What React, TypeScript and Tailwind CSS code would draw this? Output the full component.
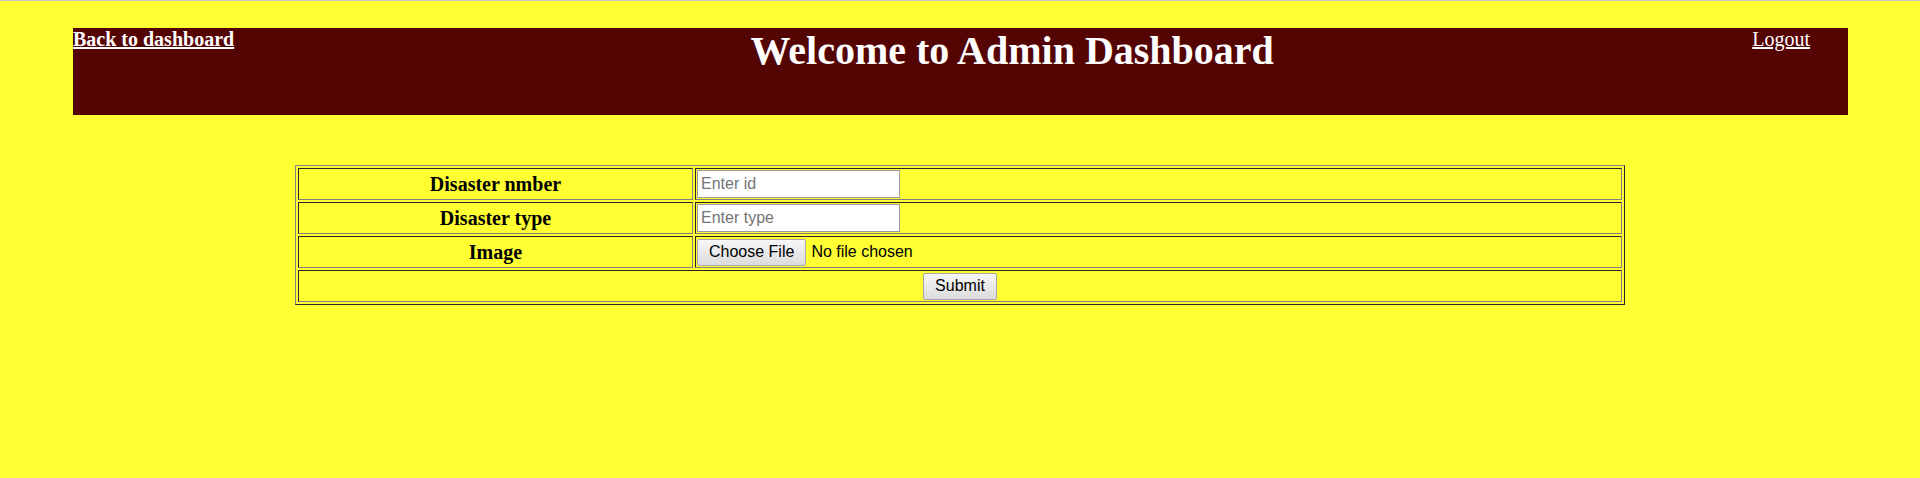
export default function App() {
  const rows = [
    { label: 'Disaster nmber', placeholder: 'Enter id' },
    { label: 'Disaster type', placeholder: 'Enter type' },
  ];

  const cell =
    'h-[32px] p-[1px] align-middle border border-t-[#262626] border-l-[#262626] border-b-[#808080] border-r-[#808080]';
  const label = 'w-[395px] text-center text-[20px] font-bold leading-[23px] text-black';
  const btn =
    "h-[27px] px-[11px] rounded-[2px] border border-[#a6a6a6] bg-gradient-to-b from-[#f7f7f7] to-[#dcdcdc] text-[16px] leading-none text-black font-['Liberation_Sans',Arial,sans-serif]";

  return (
    <div className="min-h-screen bg-[#ffff33] border-t border-[#c6c6c6] pt-[27px] font-['Liberation_Serif','Times_New_Roman',serif]">
      <header className="ml-[73px] mr-[72px] h-[87px] bg-[#550404] flex items-start text-white">
        <a href="#" className="text-[20px] font-bold leading-[23px] underline">
          Back to dashboard
        </a>
        <div className="flex-1 pl-[38px] text-center">
          <h1 className="text-[40px] font-bold leading-[46px]">Welcome to Admin Dashboard</h1>
        </div>
        <a href="#" className="mr-[38px] text-[20px] leading-[23px] underline">
          Logout
        </a>
      </header>

      <form className="mt-[50px]">
        <table className="w-[1330px] mx-auto border-separate border-spacing-[2px] border border-t-[#808080] border-l-[#808080] border-b-[#262626] border-r-[#262626]">
          <tbody>
            {rows.map((r) => (
              <tr key={r.label}>
                <th className={`${cell} ${label}`}>{r.label}</th>
                <td className={cell}>
                  <input
                    type="text"
                    placeholder={r.placeholder}
                    className="block w-[203px] h-[28px] px-[3px] bg-white border border-[#9e9e9e] text-[16px] text-black placeholder:text-[#757575] font-['Liberation_Sans',Arial,sans-serif] outline-none"
                  />
                </td>
              </tr>
            ))}
            <tr>
              <th className={`${cell} ${label}`}>Image</th>
              <td className={cell}>
                <label className="flex items-center">
                  <input type="file" className="hidden" />
                  <span className={`${btn} inline-flex items-center`}>Choose File</span>
                  <span className="ml-[5px] text-[16px] text-black font-['Liberation_Sans',Arial,sans-serif]">
                    No file chosen
                  </span>
                </label>
              </td>
            </tr>
            <tr>
              <td colSpan={2} className={`${cell} text-center`}>
                <button type="button" className={btn}>
                  Submit
                </button>
              </td>
            </tr>
          </tbody>
        </table>
      </form>
    </div>
  );
}
